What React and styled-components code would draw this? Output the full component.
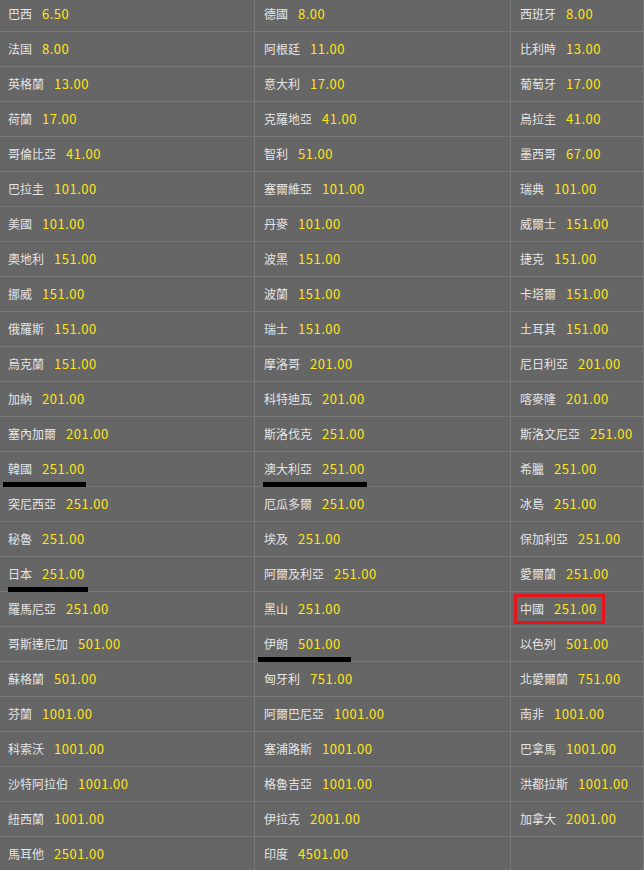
import React from 'react'
import styled, { createGlobalStyle } from 'styled-components'

const rows = [
	[['巴西', '6.50'], ['德國', '8.00'], ['西班牙', '8.00']],
	[['法国', '8.00'], ['阿根廷', '11.00'], ['比利時', '13.00']],
	[['英格蘭', '13.00'], ['意大利', '17.00'], ['葡萄牙', '17.00']],
	[['荷蘭', '17.00'], ['克羅地亞', '41.00'], ['烏拉圭', '41.00']],
	[['哥倫比亞', '41.00'], ['智利', '51.00'], ['墨西哥', '67.00']],
	[['巴拉圭', '101.00'], ['塞爾維亞', '101.00'], ['瑞典', '101.00']],
	[['美國', '101.00'], ['丹麥', '101.00'], ['威爾士', '151.00']],
	[['奧地利', '151.00'], ['波黑', '151.00'], ['捷克', '151.00']],
	[['挪威', '151.00'], ['波蘭', '151.00'], ['卡塔爾', '151.00']],
	[['俄羅斯', '151.00'], ['瑞士', '151.00'], ['土耳其', '151.00']],
	[['烏克蘭', '151.00'], ['摩洛哥', '201.00'], ['尼日利亞', '201.00']],
	[['加納', '201.00'], ['科特迪瓦', '201.00'], ['喀麥隆', '201.00']],
	[['塞內加爾', '201.00'], ['斯洛伐克', '251.00'], ['斯洛文尼亞', '251.00']],
	[['韓國', '251.00', { line: [4, 83] }], ['澳大利亞', '251.00', { line: [8, 104] }], ['希臘', '251.00']],
	[['突尼西亞', '251.00'], ['厄瓜多爾', '251.00'], ['冰島', '251.00']],
	[['秘魯', '251.00'], ['埃及', '251.00'], ['保加利亞', '251.00']],
	[['日本', '251.00', { line: [9, 80] }], ['阿爾及利亞', '251.00'], ['愛爾蘭', '251.00']],
	[['羅馬尼亞', '251.00'], ['黑山', '251.00'], ['中國', '251.00', { box: true }]],
	[['哥斯達尼加', '501.00'], ['伊朗', '501.00', { line: [3, 93] }], ['以色列', '501.00']],
	[['蘇格蘭', '501.00'], ['匈牙利', '751.00'], ['北愛爾蘭', '751.00']],
	[['芬蘭', '1001.00'], ['阿爾巴尼亞', '1001.00'], ['南非', '1001.00']],
	[['科索沃', '1001.00'], ['塞浦路斯', '1001.00'], ['巴拿馬', '1001.00']],
	[['沙特阿拉伯', '1001.00'], ['格魯吉亞', '1001.00'], ['洪都拉斯', '1001.00']],
	[['紐西蘭', '1001.00'], ['伊拉克', '2001.00'], ['加拿大', '2001.00']],
	[['馬耳他', '2501.00'], ['印度', '4501.00'], null],
]

const App = () => (
	<>
		<GlobalStyle />
		<Table>
			{rows.map((row, r) =>
				row.map((cell, c) =>
					cell ? (
						<Cell key={`${r}-${c}`}>
							<Name>{cell[0]}</Name>
							<Odds>{cell[1]}</Odds>
							{cell[2] && cell[2].line && (
								<Underline style={{ left: cell[2].line[0], width: cell[2].line[1] }} />
							)}
							{cell[2] && cell[2].box && <Highlight />}
						</Cell>
					) : (
						<Cell key={`${r}-${c}`} />
					)
				)
			)}
		</Table>
	</>
)

const GlobalStyle = createGlobalStyle`
	html, body {
		margin: 0;
		padding: 0;
		overflow: hidden;
		background: #666666;
	}
`

const Table = styled.div`
	display: grid;
	grid-template-columns: 256px 256px 1fr;
	grid-auto-rows: 35px;
	width: 645px;
	margin: -3px 0 0 -1px;
	background: #666666;
	font-family: 'Noto Sans CJK TC', 'Noto Sans', sans-serif;
`

const Cell = styled.div`
	position: relative;
	display: flex;
	align-items: center;
	box-sizing: border-box;
	padding: 0 0 1px 9px;
	border-right: 1px solid #787878;
	border-bottom: 1px solid #787878;
	white-space: nowrap;
`

const Name = styled.span`
	font-size: 12px;
	color: #e4e4e4;
`

const Odds = styled.span`
	margin-left: 10px;
	font-size: 13px;
	letter-spacing: 0.5px;
	color: #ffe31a;
`

const Underline = styled.div`
	position: absolute;
	top: 30px;
	height: 5px;
	background: #000000;
`

const Highlight = styled.div`
	position: absolute;
	left: 3px;
	top: 2px;
	width: 91px;
	height: 30px;
	box-sizing: border-box;
	border: 3px solid #e8141c;
`

export default App
